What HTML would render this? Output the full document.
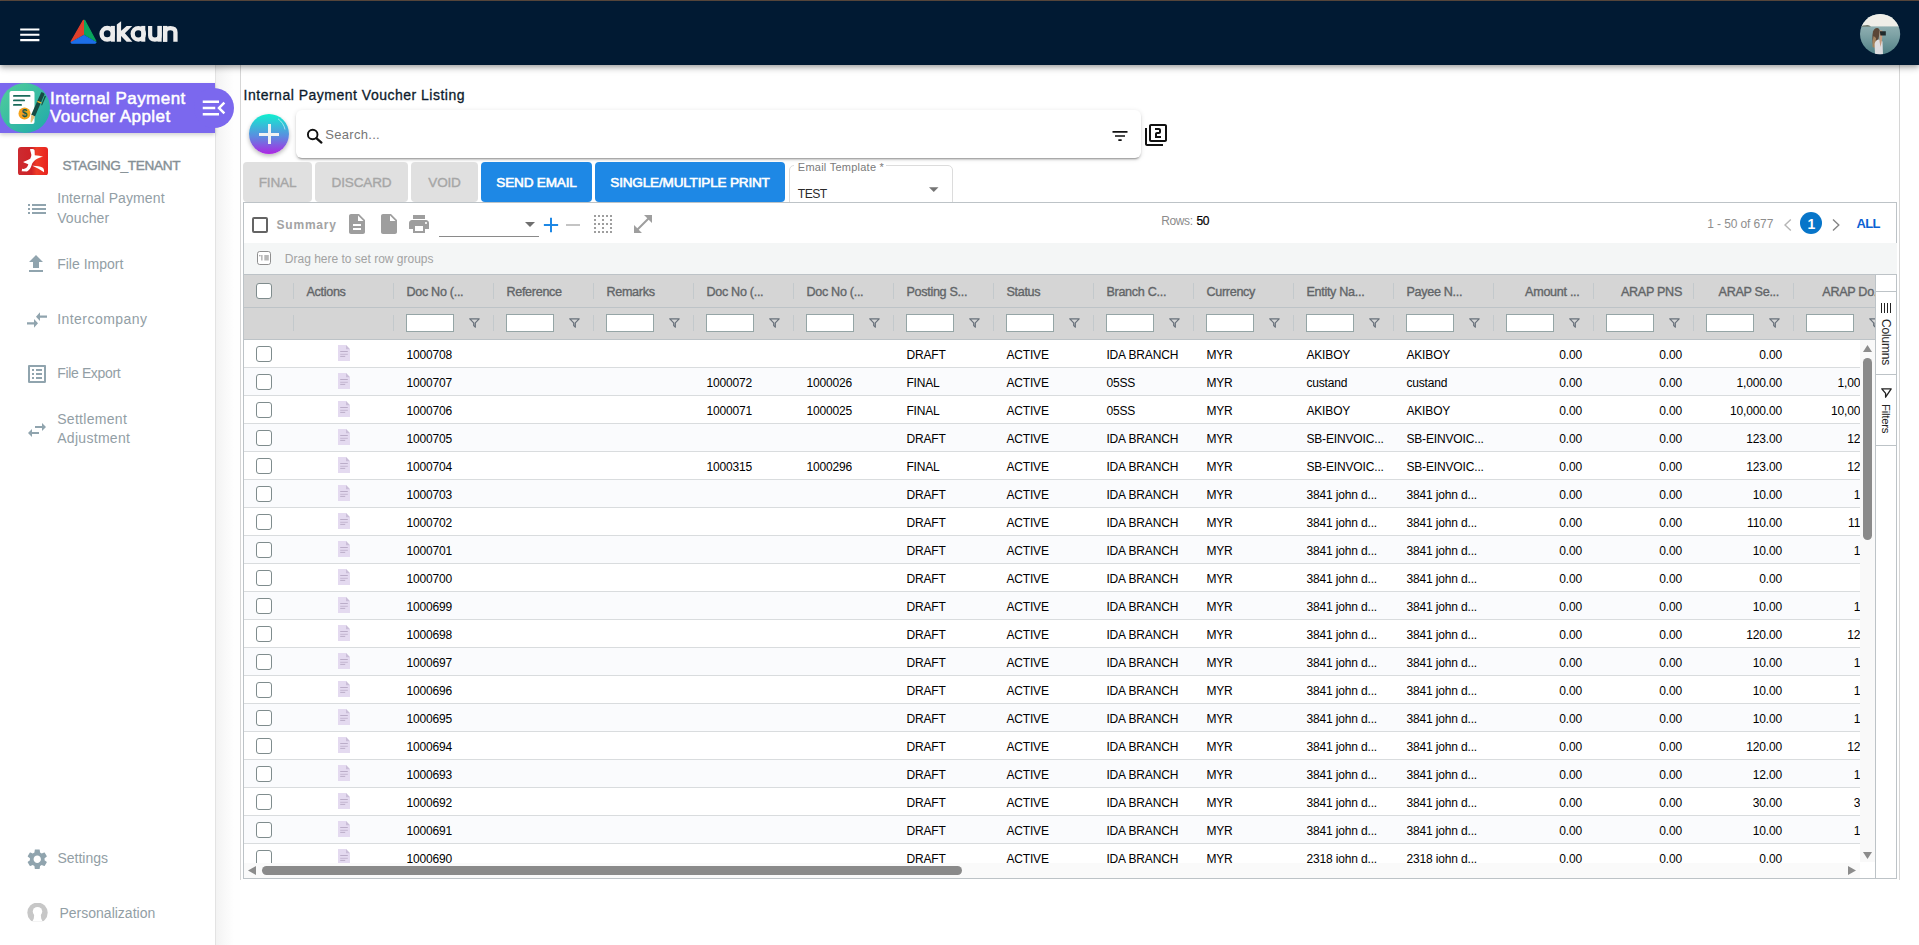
<!DOCTYPE html><html><head><meta charset="utf-8"><title>Internal Payment Voucher Listing</title><style>
*{box-sizing:border-box}
html,body{margin:0;padding:0;width:1919px;height:945px;overflow:hidden;background:#fff;font-family:"Liberation Sans",sans-serif}
.a{position:absolute;display:block}
.t{position:absolute;white-space:nowrap}
</style></head><body>
<div class="a" style="left:0;top:0;width:1919px;height:1px;background:#5c4b3f"></div>
<div class="a" style="left:0;top:1px;width:1919px;height:64px;background:#011a33;box-shadow:0 2px 4px -1px rgba(0,0,0,.2),0 4px 5px 0 rgba(0,0,0,.14),0 1px 10px 0 rgba(0,0,0,.12);z-index:5"></div>
<div class="a" style="left:0;top:0;width:1919px;height:65px;z-index:6">
<svg class="a" style="left:17.1px;top:21.9px;" width="25.6" height="25.6" viewBox="0 0 24 24"><path fill="#fff" d="M3 18h18v-2H3v2zm0-5h18v-2H3v2zm0-7v2h18V6H3z"/></svg>
<svg class="a" style="left:68px;top:18px" width="32" height="28" viewBox="0 0 32 28">
<path d="M15.4 2.3 L15.4 16.6 L3.2 23.6 Z" fill="#e0402b" stroke="#e0402b" stroke-width="1.2" stroke-linejoin="round"/>
<path d="M16.6 2.3 L16.6 16.6 L27.9 23.2 Z" fill="#0aa55c" stroke="#0aa55c" stroke-width="1.2" stroke-linejoin="round"/>
<path d="M16 17.6 L28 24.4 L27 25.2 L4 25.2 L3.2 24.6 Z" fill="#1d6fe8" stroke="#1d6fe8" stroke-width="1.2" stroke-linejoin="round"/>
</svg>
<svg class="a" style="left:98px;top:18px" width="82" height="28" viewBox="0 0 82 28"><g fill="#ececec" stroke="#ececec">
<ellipse cx="9.2" cy="15.8" rx="5.6" ry="5.75" fill="none" stroke-width="4.4"/>
<rect x="12.8" y="7.9" width="4.1" height="15.8" stroke="none"/>
<path d="M18.8 6.6 L23.1 3.3 L23.1 23.7 L18.8 23.7 Z" stroke="none"/>
<path d="M22.6 13.2 L28.6 7.9 L34.2 7.9 L26.9 15.3 L34.4 23.7 L28.6 23.7 L22.6 17.6 Z" stroke="none"/>
<ellipse cx="40.3" cy="15.8" rx="5.6" ry="5.75" fill="none" stroke-width="4.3"/>
<rect x="43.2" y="7.9" width="4.1" height="15.8" stroke="none"/>
<path d="M52.15 7.9 V17.6 Q52.15 21.55 56.9 21.55 Q61.65 21.55 61.65 17.6 V7.9" fill="none" stroke-width="4.2"/>
<rect x="59.6" y="7.9" width="4.1" height="15.8" stroke="none"/>
<rect x="65" y="7.9" width="4.2" height="15.8" stroke="none"/>
<path d="M67.1 23.7 V14.2 Q67.1 10.05 72.3 10.05 Q77.45 10.05 77.45 14.2 V23.7" fill="none" stroke-width="4.3"/>
</g></svg>
<svg class="a" style="left:1860px;top:13.7px" width="41" height="41" viewBox="0 0 41 41">
<defs><clipPath id="av"><circle cx="20.1" cy="20.1" r="20.1"/></clipPath>
<linearGradient id="sea" x1="0" y1="0" x2="0" y2="1"><stop offset="0" stop-color="#a6c0c1"/><stop offset=".5" stop-color="#7fa3a6"/><stop offset="1" stop-color="#4f7f84"/></linearGradient></defs>
<g clip-path="url(#av)">
<rect width="41" height="41" fill="url(#sea)"/>
<rect width="41" height="12.4" fill="#efeee8"/>
<path d="M1 12.6 Q3 11 5 11.6 Q7 10.8 9 11.4 L11 12.6 Z" fill="#3f4c3e"/>
<path d="M13.5 33 Q11.5 24 13 17.5 Q14.5 13.5 17.5 14 Q20 14.8 19.8 18 L18 27 Z" fill="#5a4636"/>
<path d="M12.5 33 Q12 27 13.6 22 L16 24 L15.5 34 Z" fill="#a4835e"/>
<path d="M15 41 L14.6 30 Q15.5 25.5 19 25.5 L22.5 27.5 L23 41 Z" fill="#dedde0"/>
<path d="M19.5 17 Q21 15.5 22.5 17 L22 26 L20.5 33 L19.5 27 Z" fill="#c59a7e"/>
<path d="M19.8 17.2 L25.8 17.2 L25.8 21.6 L20.4 21.6 Z" fill="#22292a"/>
</g></svg>
</div>
<div class="a" style="left:0;top:65px;width:216px;height:880px;background:#fff;border-right:1px solid #e3e3e3"></div>
<div class="a" style="left:216px;top:65px;width:24px;height:880px;background:linear-gradient(to right,#f3f3f3,#fafafa 45%,#fefefe 75%)"></div>
<div class="a" style="left:0;top:83px;width:215px;height:50px;background:#7b68ee;box-shadow:0 2px 4px rgba(0,0,0,.18)"></div>
<div class="a" style="left:194px;top:88px;width:40px;height:40px;background:#7b68ee;border-radius:50%"></div>
<svg class="a" style="left:0;top:83px" width="50" height="50" viewBox="0 0 50 50">
<defs><linearGradient id="ig" x1="0" y1="0" x2="1" y2="1"><stop offset="0" stop-color="#52cf9a"/><stop offset="1" stop-color="#1fa9ab"/></linearGradient></defs>
<circle cx="25" cy="25" r="25" fill="url(#ig)"/>
<rect x="9.5" y="8" width="25" height="33" rx="2" fill="#fff"/>
<rect x="13" y="12" width="17.5" height="1.8" rx=".9" fill="#1a6b5b"/>
<rect x="13" y="16.5" width="12" height="1.8" rx=".9" fill="#1a6b5b"/>
<rect x="13" y="21" width="9" height="1.8" rx=".9" fill="#1a6b5b"/>
<circle cx="24.5" cy="30.5" r="6" fill="#f5a31a"/>
<text x="24.5" y="34.3" text-anchor="middle" font-family="Liberation Sans" font-weight="bold" font-size="10" fill="#1a5b50">$</text>
<path d="M41.2 9.2 Q43.5 9 44.6 11 L35 33.5 L31.2 31.8 Z" fill="#174b43"/>
<path d="M31.2 31.8 L35 33.5 L31.6 39.6 L30.6 39.3 Z" fill="#e6c27a"/>
<path d="M37.6 17.8 L41.6 19.6 L41.1 20.8 L37.1 19 Z" fill="#f0b429"/>
<path d="M44.8 12.6 L46 13.2 L42 22.5 L41.2 22.1 Z" fill="#174b43"/>
</svg>
<div class="t" style="left:50px;top:89.81px;font-size:17px;line-height:17px;color:#fff;letter-spacing:0.45px;-webkit-text-stroke:0.5px #fff;">Internal Payment</div>
<div class="t" style="left:50px;top:108.21px;font-size:17px;line-height:17px;color:#fff;letter-spacing:0.45px;-webkit-text-stroke:0.5px #fff;">Voucher Applet</div>
<svg class="a" style="left:198.75px;top:92.9px;" width="30" height="30" viewBox="0 0 24 24"><path fill="#fff" d="M3 18h13v-2H3v2zm0-5h10v-2H3v2zm0-7v2h13V6H3zm18 9.59L17.42 12 21 8.41 19.59 7l-5 5 5 5L21 15.59z"/></svg>
<svg class="a" style="left:18px;top:146.5px" width="30" height="28.5" viewBox="0 0 30 28.5">
<defs><linearGradient id="rg" x1="0" y1="0" x2="1" y2="0"><stop offset="0" stop-color="#cc2b31"/><stop offset=".45" stop-color="#cf2227"/><stop offset=".62" stop-color="#ee3b27"/><stop offset="1" stop-color="#e8231f"/></linearGradient></defs>
<rect width="30" height="28.5" rx="3" fill="url(#rg)"/>
<path d="M12 2.2 C14 1.8 16.3 2 16.6 3.5 L16.8 8.3 C19.5 8.6 23 9 25 9.8 C22 10.5 19.5 11.4 17.5 12.8 C15.5 14.2 14.3 16 13.6 18.3 C13 20.5 11.5 23.5 9 24.4 L3.6 24.2 C4 23.2 4.2 22 3.9 21.4 C5.3 22.4 7 22 8.4 20.8 C9.5 19.8 10 18.6 10.3 17.3 C8.8 16.8 6.8 16 5.1 15.1 C7.5 14.2 10 13 12.2 11.7 C12.8 10.5 13.5 9 13.3 7.5 C13 5.5 12.2 3.8 12 2.2 Z" fill="#fff"/>
<path d="M14.4 18.8 C18 18.6 22 19.5 24.4 20.6 C25.8 21.3 26.3 23.5 26 25.3 C22.5 23 18.5 20.5 14.4 18.8 Z" fill="#fff"/>
</svg>
<div class="t" style="left:62.4px;top:158.79px;font-size:13.6px;line-height:13.6px;color:#858f95;letter-spacing:-0.3px;-webkit-text-stroke:0.4px #858f95;">STAGING_TENANT</div>
<svg class="a" style="left:24.8px;top:197px;" width="24" height="24" viewBox="0 0 24 24"><path fill="#90a4ae" d="M3 13h2v-2H3v2zm0 4h2v-2H3v2zm0-8h2V7H3v2zm4 4h14v-2H7v2zm0 4h14v-2H7v2zM7 7v2h14V7H7z"/></svg>
<div class="t" style="left:57.2px;top:191.35px;font-size:14px;line-height:14px;color:#929ea5;letter-spacing:0.1px;">Internal Payment</div>
<div class="t" style="left:57.2px;top:210.95px;font-size:14px;line-height:14px;color:#929ea5;letter-spacing:0.1px;">Voucher</div>
<svg class="a" style="left:24.3px;top:252px;" width="24" height="24" viewBox="0 0 24 24"><path fill="#90a4ae" d="M9 16h6v-6h4l-7-7-7 7h4zm-4 2h14v2H5z"/></svg>
<div class="t" style="left:57.2px;top:256.65px;font-size:14px;line-height:14px;color:#929ea5;letter-spacing:0px;">File Import</div>
<svg class="a" style="left:24.7px;top:310px" width="24" height="20" viewBox="0 3 24 18" preserveAspectRatio="none"><path fill="#90a4ae" d="M9.01 14H2v2h7.01v3L13 15l-3.99-4v3zm5.98-1v-3H22V8h-7.01V5L11 9l3.99 4z"/></svg>
<div class="t" style="left:57.2px;top:312.05px;font-size:14px;line-height:14px;color:#929ea5;letter-spacing:0.45px;">Intercompany</div>
<svg class="a" style="left:25.2px;top:362px;" width="24" height="24" viewBox="0 0 24 24"><path fill="#90a4ae" d="M19 5v14H5V5h14m1.1-2H3.9c-.5 0-.9.4-.9.9v16.2c0 .4.4.9.9.9h16.2c.4 0 .9-.5.9-.9V3.9c0-.5-.5-.9-.9-.9zM11 7h6v2h-6V7zm0 4h6v2h-6v-2zm0 4h6v2h-6zM7 7h2v2H7zm0 4h2v2H7zm0 4h2v2H7z"/></svg>
<div class="t" style="left:57.2px;top:366.35px;font-size:14px;line-height:14px;color:#929ea5;letter-spacing:-0.35px;">File Export</div>
<svg class="a" style="left:25.2px;top:417.5px;" width="24" height="24" viewBox="0 0 24 24"><path fill="#90a4ae" d="M6.99 11L3 15l3.99 4v-3H14v-2H6.99v-3zM21 9l-3.99-4v3H10v2h7.01v3L21 9z"/></svg>
<div class="t" style="left:57.2px;top:411.55px;font-size:14px;line-height:14px;color:#929ea5;letter-spacing:0.3px;">Settlement</div>
<div class="t" style="left:57.2px;top:430.95px;font-size:14px;line-height:14px;color:#929ea5;letter-spacing:0.3px;">Adjustment</div>
<svg class="a" style="left:24.9px;top:847px;" width="24.5" height="24.5" viewBox="0 0 24 24"><path fill="#90a4ae" d="M19.14 12.94c.04-.3.06-.61.06-.94 0-.32-.02-.64-.07-.94l2.03-1.58c.18-.14.23-.41.12-.61l-1.92-3.32c-.12-.22-.37-.29-.59-.22l-2.39.96c-.5-.38-1.03-.7-1.62-.94l-.36-2.54c-.04-.24-.24-.41-.48-.41h-3.84c-.24 0-.43.17-.47.41l-.36 2.54c-.59.24-1.13.57-1.62.94l-2.39-.96c-.22-.08-.47 0-.59.22L2.74 8.87c-.12.21-.08.47.12.61l2.03 1.58c-.05.3-.09.63-.09.94s.02.64.07.94l-2.03 1.58c-.18.14-.23.41-.12.61l1.92 3.32c.12.22.37.29.59.22l2.39-.96c.5.38 1.03.7 1.62.94l.36 2.54c.05.24.24.41.48.41h3.84c.24 0 .44-.17.47-.41l.36-2.54c.59-.24 1.13-.56 1.62-.94l2.39.96c.22.08.47 0 .59-.22l1.92-3.32c.12-.22.07-.47-.12-.61l-2.01-1.58zM12 15.6c-1.98 0-3.6-1.62-3.6-3.6s1.62-3.6 3.6-3.6 3.6 1.62 3.6 3.6-1.62 3.6-3.6 3.6z"/></svg>
<div class="t" style="left:57.4px;top:851.15px;font-size:14px;line-height:14px;color:#929ea5;letter-spacing:0px;">Settings</div>
<svg class="a" style="left:26.5px;top:903px" width="21" height="19" viewBox="0 0 21 19">
<defs><clipPath id="pc"><rect x="0" y="0" width="21" height="18.2"/></clipPath></defs>
<g clip-path="url(#pc)"><circle cx="10.5" cy="9.8" r="10.2" fill="#c7c7c7"/>
<circle cx="10.5" cy="8.6" r="4.7" fill="#fff"/>
<path d="M7.4 10 H13.6 L14.2 15.5 Q14.8 18 17 19 H4 Q6.2 18 6.8 15.5 Z" fill="#fff"/></g>
</svg>
<div class="t" style="left:59.5px;top:906.35px;font-size:14px;line-height:14px;color:#929ea5;letter-spacing:0px;">Personalization</div>
<div class="a" style="left:240px;top:65px;width:1660px;height:815px;border-left:1px solid #d6d6d6;border-right:1px solid #d6d6d6;background:#fff"></div>
<div class="t" style="left:243.6px;top:87.95px;font-size:14px;line-height:14px;color:#0d1b2c;letter-spacing:0.5px;-webkit-text-stroke:0.3px #0d1b2c;">Internal Payment Voucher Listing</div>
<div class="a" style="left:249px;top:114px;width:40px;height:40px;border-radius:50%;background:linear-gradient(to bottom,#0ff0cf,#5a8ee0 55%,#ad26e2);box-shadow:0 2px 4px rgba(0,0,0,.28)"></div>
<svg class="a" style="left:249px;top:114px" width="40" height="40" viewBox="0 0 40 40"><path d="M29 4.8 A17.5 17.5 0 0 1 36 15.5" fill="none" stroke="rgba(255,255,255,.55)" stroke-width="1"/></svg>
<div class="a" style="left:259px;top:132.5px;width:20px;height:3px;background:#f2f2f2"></div>
<div class="a" style="left:267.5px;top:124px;width:3px;height:20px;background:#f2f2f2"></div>
<div class="a" style="left:296px;top:109.5px;width:844.5px;height:48.5px;border-radius:6px;background:#fff;box-shadow:0 2px 2px rgba(0,0,0,.14),0 1px 5px rgba(0,0,0,.12),0 3px 1px -2px rgba(0,0,0,.2)"></div>
<svg class="a" style="left:305px;top:127px" width="19" height="18" viewBox="0 0 19 18"><circle cx="7.7" cy="7.5" r="4.8" fill="none" stroke="#111" stroke-width="1.9"/><path d="M11.3 11.2 L16.4 15.6" stroke="#111" stroke-width="2.3" stroke-linecap="round"/></svg>
<div class="t" style="left:325.3px;top:127.80px;font-size:13px;line-height:13px;color:#767676;letter-spacing:0.3px;">Search...</div>
<svg class="a" style="left:1110px;top:126px;" width="20" height="20" viewBox="0 0 24 24"><path fill="#111" d="M10 18h4v-2h-4v2zM3 6v2h18V6H3zm3 7h12v-2H6v2z"/></svg>
<svg class="a" style="left:1144px;top:123px;" width="24" height="24" viewBox="0 0 24 24"><path fill="#111" d="M3 5H1v16c0 1.1.9 2 2 2h16v-2H3V5zm18-4H7c-1.1 0-2 .9-2 2v14c0 1.1.9 2 2 2h14c1.1 0 2-.9 2-2V3c0-1.1-.9-2-2-2zm0 16H7V3h14v14zm-4-4h-4v-2h2c1.1 0 2-.89 2-2V7c0-1.11-.9-2-2-2h-4v2h4v2h-2c-1.1 0-2 .89-2 2v4h6v-2z"/></svg>
<div class="a" style="left:243px;top:162px;width:69px;height:39.5px;border-radius:4px;background:#e0e0e0"></div>
<div class="t" style="left:243px;width:69px;top:175.59px;font-size:13.6px;line-height:13.6px;text-align:center;color:#a6a6a6;letter-spacing:-0.2px;-webkit-text-stroke:0.35px #a6a6a6">FINAL</div>
<div class="a" style="left:315px;top:162px;width:93px;height:39.5px;border-radius:4px;background:#e0e0e0"></div>
<div class="t" style="left:315px;width:93px;top:175.59px;font-size:13.6px;line-height:13.6px;text-align:center;color:#a6a6a6;letter-spacing:-0.2px;-webkit-text-stroke:0.35px #a6a6a6">DISCARD</div>
<div class="a" style="left:411px;top:162px;width:67px;height:39.5px;border-radius:4px;background:#e0e0e0"></div>
<div class="t" style="left:411px;width:67px;top:175.59px;font-size:13.6px;line-height:13.6px;text-align:center;color:#a6a6a6;letter-spacing:-0.2px;-webkit-text-stroke:0.35px #a6a6a6">VOID</div>
<div class="a" style="left:481px;top:162px;width:111px;height:39.5px;border-radius:4px;background:#1e88e5"></div>
<div class="t" style="left:481px;width:111px;top:175.59px;font-size:13.6px;line-height:13.6px;text-align:center;color:#fff;letter-spacing:-0.2px;-webkit-text-stroke:0.6px #fff">SEND EMAIL</div>
<div class="a" style="left:595px;top:162px;width:190px;height:39.5px;border-radius:4px;background:#1e88e5"></div>
<div class="t" style="left:595px;width:190px;top:175.59px;font-size:13.6px;line-height:13.6px;text-align:center;color:#fff;letter-spacing:-0.2px;-webkit-text-stroke:0.6px #fff">SINGLE/MULTIPLE PRINT</div>
<div class="a" style="left:788.5px;top:164.6px;width:164px;height:50px;border:1px solid #dcdcdc;border-radius:5px"></div>
<div class="a" style="left:794px;top:163px;width:92px;height:5px;background:#fff"></div>
<div class="t" style="left:797.8px;top:161.99px;font-size:11px;line-height:11px;color:#7a7a7a;letter-spacing:0.25px;">Email Template *</div>
<div class="t" style="left:797.8px;top:187.77px;font-size:12.2px;line-height:12.2px;color:#2a2a2a;letter-spacing:-0.55px;">TEST</div>
<svg class="a" style="left:929.2px;top:187px" width="9.5" height="5" viewBox="0 0 10 5"><path d="M0 0 L10 0 L5 5 Z" fill="#757575"/></svg>
<div class="a" style="left:243px;top:202px;width:1654px;height:677px;border:1px solid #bdc3c7;background:#fff"></div>
<div class="a" style="left:252px;top:217px;width:16px;height:16px;border:2px solid #646464;border-radius:2px"></div>
<div class="t" style="left:276.5px;top:219.04px;font-size:12px;line-height:12px;color:#a3a3a3;font-weight:bold;letter-spacing:0.8px;">Summary</div>
<svg class="a" style="left:344.9px;top:212.2px;" width="24" height="24" viewBox="0 0 24 24"><path fill="#9e9e9e" d="M14 2H6c-1.1 0-1.99.9-1.99 2L4 20c0 1.1.89 2 1.99 2H18c1.1 0 2-.9 2-2V8l-6-6zm2 16H8v-2h8v2zm0-4H8v-2h8v2zm-3-5V3.5L18.5 9H13z"/></svg>
<svg class="a" style="left:376.9px;top:212.2px;" width="24" height="24" viewBox="0 0 24 24"><path fill="#9e9e9e" d="M6 2c-1.1 0-1.99.9-1.99 2L4 20c0 1.1.89 2 1.99 2H18c1.1 0 2-.9 2-2V8l-6-6H6zm7 7V3.5L18.5 9H13z"/></svg>
<svg class="a" style="left:406.8px;top:212.2px;" width="24" height="24" viewBox="0 0 24 24"><path fill="#9e9e9e" d="M19 8H5c-1.66 0-3 1.34-3 3v6h4v4h12v-4h4v-6c0-1.66-1.34-3-3-3zm-3 11H8v-5h8v5zm3-7c-.55 0-1-.45-1-1s.45-1 1-1 1 .45 1 1-.45 1-1 1zm-1-9H6v4h12V3z"/></svg>
<div class="a" style="left:439px;top:236px;width:100px;height:1px;background:#8a8a8a"></div>
<svg class="a" style="left:525.4px;top:222px" width="10" height="5" viewBox="0 0 10 5"><path d="M0 0 L10 0 L5 5 Z" fill="#6f6f6f"/></svg>
<svg class="a" style="left:539.3px;top:213.2px;transform:scale(1.02)" width="24" height="24" viewBox="0 0 24 24"><path fill="#1e88e5" d="M19 13h-6v6h-2v-6H5v-2h6V5h2v6h6v2z"/></svg>
<svg class="a" style="left:561.2px;top:213px;" width="24" height="24" viewBox="0 0 24 24"><path fill="#c4c4c4" d="M19 13H5v-2h14v2z"/></svg>
<svg class="a" style="left:591px;top:212px;" width="24" height="24" viewBox="0 0 24 24"><path fill="#9e9e9e" d="M7 5h2V3H7v2zm0 8h2v-2H7v2zm0 8h2v-2H7v2zm4-4h2v-2h-2v2zm0 4h2v-2h-2v2zm-8 0h2v-2H3v2zm0-4h2v-2H3v2zm0-4h2v-2H3v2zm0-4h2V7H3v2zm0-4h2V3H3v2zm8 8h2v-2h-2v2zm8 4h2v-2h-2v2zm0-4h2v-2h-2v2zm0 8h2v-2h-2v2zm0-12h2V7h-2v2zm-8 0h2V7h-2v2zm8-6v2h2V3h-2zm-8 2h2V3h-2v2zm4 16h2v-2h-2v2zm0-8h2v-2h-2v2zm0-8h2V3h-2v2z"/></svg>
<svg class="a" style="left:631px;top:212px;" width="24" height="24" viewBox="0 0 24 24"><path fill="#9e9e9e" d="M21 11V3h-8l3.29 3.29-10 10L3 13v8h8l-3.29-3.29 10-10z"/></svg>
<div class="t" style="left:1161.3px;top:214.74px;font-size:12px;line-height:12px;color:#8b8b8b;letter-spacing:-0.4px;">Rows:</div>
<div class="t" style="left:1196.5px;top:214.74px;font-size:12px;line-height:12px;color:#000;letter-spacing:-0.4px;-webkit-text-stroke:0.2px #000;">50</div>
<div class="t" style="left:1707.2px;top:217.84px;font-size:12px;line-height:12px;color:#8e8e8e;letter-spacing:-0.1px;">1 - 50 of 677</div>
<svg class="a" style="left:1783px;top:218px" width="10" height="14" viewBox="0 0 10 14"><path d="M7.8 1.5 L2 7 L7.8 12.5" fill="none" stroke="#b5b5b5" stroke-width="1.4"/></svg>
<div class="a" style="left:1800px;top:212px;width:22px;height:22px;border-radius:50%;background:#0775c9"></div>
<div class="t" style="left:1800.5px;top:216.55px;font-size:14px;line-height:14px;color:#fff;font-weight:bold;width:22px;text-align:center;">1</div>
<svg class="a" style="left:1831px;top:218px" width="10" height="14" viewBox="0 0 10 14"><path d="M2 1.5 L7.8 7 L2 12.5" fill="none" stroke="#858585" stroke-width="1.4"/></svg>
<div class="t" style="left:1856.6px;top:217.00px;font-size:13px;line-height:13px;color:#0a62d4;font-weight:bold;letter-spacing:-0.7px;">ALL</div>
<div class="a" style="left:244px;top:243px;width:1653px;height:32px;background:#f4f6f6;border-bottom:1px solid #bdc3c7"></div>
<svg class="a" style="left:257px;top:251px" width="14" height="14" viewBox="0 0 14 14"><rect x=".5" y=".5" width="13" height="13" rx="2.2" fill="#fff" stroke="#8f8f8f" stroke-width="1"/><rect x="2.2" y="4" width="1.3" height="1.3" fill="#9a9a9a"/><rect x="4.2" y="4" width="1.3" height="5.5" fill="#aaa"/><rect x="7.3" y="4" width="4.5" height="5.5" fill="#b8b8b8"/></svg>
<div class="t" style="left:284.8px;top:253.04px;font-size:12px;line-height:12px;color:#a2a2a2;letter-spacing:0px;">Drag here to set row groups</div>
<div class="a" style="left:244px;top:275px;width:1631px;height:65px;background:#d5d5d5"></div>
<div class="a" style="left:244px;top:307px;width:1631px;height:1px;background:#bdc3c7"></div>
<div class="a" style="left:244px;top:339px;width:1631px;height:1px;background:#bdc3c7"></div>
<div class="a" style="left:256px;top:283px;width:16px;height:16px;border:1px solid #7f8c8d;border-radius:3px;background:#fff"></div>
<div class="a" style="left:293px;top:283px;width:1px;height:16px;background:#c3c9cc"></div>
<div class="a" style="left:293px;top:315px;width:1px;height:16px;background:#c3c9cc"></div>
<div class="a" style="left:393px;top:283px;width:1px;height:16px;background:#c3c9cc"></div>
<div class="a" style="left:393px;top:315px;width:1px;height:16px;background:#c3c9cc"></div>
<div class="a" style="left:493px;top:283px;width:1px;height:16px;background:#c3c9cc"></div>
<div class="a" style="left:493px;top:315px;width:1px;height:16px;background:#c3c9cc"></div>
<div class="a" style="left:593px;top:283px;width:1px;height:16px;background:#c3c9cc"></div>
<div class="a" style="left:593px;top:315px;width:1px;height:16px;background:#c3c9cc"></div>
<div class="a" style="left:693px;top:283px;width:1px;height:16px;background:#c3c9cc"></div>
<div class="a" style="left:693px;top:315px;width:1px;height:16px;background:#c3c9cc"></div>
<div class="a" style="left:793px;top:283px;width:1px;height:16px;background:#c3c9cc"></div>
<div class="a" style="left:793px;top:315px;width:1px;height:16px;background:#c3c9cc"></div>
<div class="a" style="left:893px;top:283px;width:1px;height:16px;background:#c3c9cc"></div>
<div class="a" style="left:893px;top:315px;width:1px;height:16px;background:#c3c9cc"></div>
<div class="a" style="left:993px;top:283px;width:1px;height:16px;background:#c3c9cc"></div>
<div class="a" style="left:993px;top:315px;width:1px;height:16px;background:#c3c9cc"></div>
<div class="a" style="left:1093px;top:283px;width:1px;height:16px;background:#c3c9cc"></div>
<div class="a" style="left:1093px;top:315px;width:1px;height:16px;background:#c3c9cc"></div>
<div class="a" style="left:1193px;top:283px;width:1px;height:16px;background:#c3c9cc"></div>
<div class="a" style="left:1193px;top:315px;width:1px;height:16px;background:#c3c9cc"></div>
<div class="a" style="left:1293px;top:283px;width:1px;height:16px;background:#c3c9cc"></div>
<div class="a" style="left:1293px;top:315px;width:1px;height:16px;background:#c3c9cc"></div>
<div class="a" style="left:1393px;top:283px;width:1px;height:16px;background:#c3c9cc"></div>
<div class="a" style="left:1393px;top:315px;width:1px;height:16px;background:#c3c9cc"></div>
<div class="a" style="left:1493px;top:283px;width:1px;height:16px;background:#c3c9cc"></div>
<div class="a" style="left:1493px;top:315px;width:1px;height:16px;background:#c3c9cc"></div>
<div class="a" style="left:1593px;top:283px;width:1px;height:16px;background:#c3c9cc"></div>
<div class="a" style="left:1593px;top:315px;width:1px;height:16px;background:#c3c9cc"></div>
<div class="a" style="left:1693px;top:283px;width:1px;height:16px;background:#c3c9cc"></div>
<div class="a" style="left:1693px;top:315px;width:1px;height:16px;background:#c3c9cc"></div>
<div class="a" style="left:1793px;top:283px;width:1px;height:16px;background:#c3c9cc"></div>
<div class="a" style="left:1793px;top:315px;width:1px;height:16px;background:#c3c9cc"></div>
<div class="t" style="left:306.4px;top:285.63px;font-size:12.6px;line-height:12.6px;color:#626568;letter-spacing:-0.3px;-webkit-text-stroke:0.35px #626568;">Actions</div>
<div class="t" style="left:406.4px;top:285.63px;font-size:12.6px;line-height:12.6px;color:#626568;letter-spacing:-0.3px;-webkit-text-stroke:0.35px #626568;">Doc No (...</div>
<div class="t" style="left:506.4px;top:285.63px;font-size:12.6px;line-height:12.6px;color:#626568;letter-spacing:-0.3px;-webkit-text-stroke:0.35px #626568;">Reference</div>
<div class="t" style="left:606.4px;top:285.63px;font-size:12.6px;line-height:12.6px;color:#626568;letter-spacing:-0.3px;-webkit-text-stroke:0.35px #626568;">Remarks</div>
<div class="t" style="left:706.4px;top:285.63px;font-size:12.6px;line-height:12.6px;color:#626568;letter-spacing:-0.3px;-webkit-text-stroke:0.35px #626568;">Doc No (...</div>
<div class="t" style="left:806.4px;top:285.63px;font-size:12.6px;line-height:12.6px;color:#626568;letter-spacing:-0.3px;-webkit-text-stroke:0.35px #626568;">Doc No (...</div>
<div class="t" style="left:906.4px;top:285.63px;font-size:12.6px;line-height:12.6px;color:#626568;letter-spacing:-0.3px;-webkit-text-stroke:0.35px #626568;">Posting S...</div>
<div class="t" style="left:1006.4px;top:285.63px;font-size:12.6px;line-height:12.6px;color:#626568;letter-spacing:-0.3px;-webkit-text-stroke:0.35px #626568;">Status</div>
<div class="t" style="left:1106.4px;top:285.63px;font-size:12.6px;line-height:12.6px;color:#626568;letter-spacing:-0.3px;-webkit-text-stroke:0.35px #626568;">Branch C...</div>
<div class="t" style="left:1206.4px;top:285.63px;font-size:12.6px;line-height:12.6px;color:#626568;letter-spacing:-0.3px;-webkit-text-stroke:0.35px #626568;">Currency</div>
<div class="t" style="left:1306.4px;top:285.63px;font-size:12.6px;line-height:12.6px;color:#626568;letter-spacing:-0.3px;-webkit-text-stroke:0.35px #626568;">Entity Na...</div>
<div class="t" style="left:1406.4px;top:285.63px;font-size:12.6px;line-height:12.6px;color:#626568;letter-spacing:-0.3px;-webkit-text-stroke:0.35px #626568;">Payee N...</div>
<div class="t" style="right:339.5px;top:285.63px;font-size:12.6px;line-height:12.6px;color:#626568;letter-spacing:-0.3px;-webkit-text-stroke:0.35px #626568;">Amount ...</div>
<div class="t" style="right:237px;top:285.63px;font-size:12.6px;line-height:12.6px;color:#626568;letter-spacing:-0.3px;-webkit-text-stroke:0.35px #626568;">ARAP PNS</div>
<div class="t" style="right:140px;top:285.63px;font-size:12.6px;line-height:12.6px;color:#626568;letter-spacing:-0.3px;-webkit-text-stroke:0.35px #626568;">ARAP Se...</div>
<div class="a" style="left:1793px;top:280px;width:82px;height:24px;overflow:hidden">
<div class="t" style="left:29.3px;top:5.63px;font-size:12.6px;line-height:12.6px;color:#626568;letter-spacing:-0.3px;-webkit-text-stroke:0.35px #626568;">ARAP Do...</div>
</div>
<div class="a" style="left:406px;top:314px;width:48px;height:18px;border:1px solid #95a5a6;background:#fff"></div>
<svg class="a" style="left:469px;top:318px" width="11" height="10" viewBox="0 0 11 10"><path d="M0.8 0.8 L10.2 0.8 L6.3 4.8 L6.3 9.2 L4.7 7.6 L4.7 4.8 Z" fill="none" stroke="#67707a" stroke-width="1.2" stroke-linejoin="round"/></svg>
<div class="a" style="left:506px;top:314px;width:48px;height:18px;border:1px solid #95a5a6;background:#fff"></div>
<svg class="a" style="left:569px;top:318px" width="11" height="10" viewBox="0 0 11 10"><path d="M0.8 0.8 L10.2 0.8 L6.3 4.8 L6.3 9.2 L4.7 7.6 L4.7 4.8 Z" fill="none" stroke="#67707a" stroke-width="1.2" stroke-linejoin="round"/></svg>
<div class="a" style="left:606px;top:314px;width:48px;height:18px;border:1px solid #95a5a6;background:#fff"></div>
<svg class="a" style="left:669px;top:318px" width="11" height="10" viewBox="0 0 11 10"><path d="M0.8 0.8 L10.2 0.8 L6.3 4.8 L6.3 9.2 L4.7 7.6 L4.7 4.8 Z" fill="none" stroke="#67707a" stroke-width="1.2" stroke-linejoin="round"/></svg>
<div class="a" style="left:706px;top:314px;width:48px;height:18px;border:1px solid #95a5a6;background:#fff"></div>
<svg class="a" style="left:769px;top:318px" width="11" height="10" viewBox="0 0 11 10"><path d="M0.8 0.8 L10.2 0.8 L6.3 4.8 L6.3 9.2 L4.7 7.6 L4.7 4.8 Z" fill="none" stroke="#67707a" stroke-width="1.2" stroke-linejoin="round"/></svg>
<div class="a" style="left:806px;top:314px;width:48px;height:18px;border:1px solid #95a5a6;background:#fff"></div>
<svg class="a" style="left:869px;top:318px" width="11" height="10" viewBox="0 0 11 10"><path d="M0.8 0.8 L10.2 0.8 L6.3 4.8 L6.3 9.2 L4.7 7.6 L4.7 4.8 Z" fill="none" stroke="#67707a" stroke-width="1.2" stroke-linejoin="round"/></svg>
<div class="a" style="left:906px;top:314px;width:48px;height:18px;border:1px solid #95a5a6;background:#fff"></div>
<svg class="a" style="left:969px;top:318px" width="11" height="10" viewBox="0 0 11 10"><path d="M0.8 0.8 L10.2 0.8 L6.3 4.8 L6.3 9.2 L4.7 7.6 L4.7 4.8 Z" fill="none" stroke="#67707a" stroke-width="1.2" stroke-linejoin="round"/></svg>
<div class="a" style="left:1006px;top:314px;width:48px;height:18px;border:1px solid #95a5a6;background:#fff"></div>
<svg class="a" style="left:1069px;top:318px" width="11" height="10" viewBox="0 0 11 10"><path d="M0.8 0.8 L10.2 0.8 L6.3 4.8 L6.3 9.2 L4.7 7.6 L4.7 4.8 Z" fill="none" stroke="#67707a" stroke-width="1.2" stroke-linejoin="round"/></svg>
<div class="a" style="left:1106px;top:314px;width:48px;height:18px;border:1px solid #95a5a6;background:#fff"></div>
<svg class="a" style="left:1169px;top:318px" width="11" height="10" viewBox="0 0 11 10"><path d="M0.8 0.8 L10.2 0.8 L6.3 4.8 L6.3 9.2 L4.7 7.6 L4.7 4.8 Z" fill="none" stroke="#67707a" stroke-width="1.2" stroke-linejoin="round"/></svg>
<div class="a" style="left:1206px;top:314px;width:48px;height:18px;border:1px solid #95a5a6;background:#fff"></div>
<svg class="a" style="left:1269px;top:318px" width="11" height="10" viewBox="0 0 11 10"><path d="M0.8 0.8 L10.2 0.8 L6.3 4.8 L6.3 9.2 L4.7 7.6 L4.7 4.8 Z" fill="none" stroke="#67707a" stroke-width="1.2" stroke-linejoin="round"/></svg>
<div class="a" style="left:1306px;top:314px;width:48px;height:18px;border:1px solid #95a5a6;background:#fff"></div>
<svg class="a" style="left:1369px;top:318px" width="11" height="10" viewBox="0 0 11 10"><path d="M0.8 0.8 L10.2 0.8 L6.3 4.8 L6.3 9.2 L4.7 7.6 L4.7 4.8 Z" fill="none" stroke="#67707a" stroke-width="1.2" stroke-linejoin="round"/></svg>
<div class="a" style="left:1406px;top:314px;width:48px;height:18px;border:1px solid #95a5a6;background:#fff"></div>
<svg class="a" style="left:1469px;top:318px" width="11" height="10" viewBox="0 0 11 10"><path d="M0.8 0.8 L10.2 0.8 L6.3 4.8 L6.3 9.2 L4.7 7.6 L4.7 4.8 Z" fill="none" stroke="#67707a" stroke-width="1.2" stroke-linejoin="round"/></svg>
<div class="a" style="left:1506px;top:314px;width:48px;height:18px;border:1px solid #95a5a6;background:#fff"></div>
<svg class="a" style="left:1569px;top:318px" width="11" height="10" viewBox="0 0 11 10"><path d="M0.8 0.8 L10.2 0.8 L6.3 4.8 L6.3 9.2 L4.7 7.6 L4.7 4.8 Z" fill="none" stroke="#67707a" stroke-width="1.2" stroke-linejoin="round"/></svg>
<div class="a" style="left:1606px;top:314px;width:48px;height:18px;border:1px solid #95a5a6;background:#fff"></div>
<svg class="a" style="left:1669px;top:318px" width="11" height="10" viewBox="0 0 11 10"><path d="M0.8 0.8 L10.2 0.8 L6.3 4.8 L6.3 9.2 L4.7 7.6 L4.7 4.8 Z" fill="none" stroke="#67707a" stroke-width="1.2" stroke-linejoin="round"/></svg>
<div class="a" style="left:1706px;top:314px;width:48px;height:18px;border:1px solid #95a5a6;background:#fff"></div>
<svg class="a" style="left:1769px;top:318px" width="11" height="10" viewBox="0 0 11 10"><path d="M0.8 0.8 L10.2 0.8 L6.3 4.8 L6.3 9.2 L4.7 7.6 L4.7 4.8 Z" fill="none" stroke="#67707a" stroke-width="1.2" stroke-linejoin="round"/></svg>
<div class="a" style="left:1806px;top:314px;width:48px;height:18px;border:1px solid #95a5a6;background:#fff"></div>
<svg class="a" style="left:1869px;top:318px" width="11" height="10" viewBox="0 0 11 10"><path d="M0.8 0.8 L10.2 0.8 L6.3 4.8 L6.3 9.2 L4.7 7.6 L4.7 4.8 Z" fill="none" stroke="#67707a" stroke-width="1.2" stroke-linejoin="round"/></svg>
<div class="a" style="left:244px;top:340px;width:1616px;height:523px;overflow:hidden">
<div class="a" style="left:0;top:0px;width:1616px;height:28px;background:#fff;border-bottom:1px solid #d9dcde"></div>
<div class="a" style="left:12px;top:6px;width:16px;height:16px;border:1px solid #7f8c8d;border-radius:3px;background:#fff"></div>
<svg class="a" style="left:94px;top:5.3px" width="12" height="16" viewBox="0 0 12 16"><path d="M0 0 H8 L12 4.3 V16 H0 Z" fill="#e4daf0"/><path d="M8 0 L12 4.3 H8 Z" fill="#cbbfd9"/><rect x="2.2" y="6" width="7.6" height=".9" fill="#b6a9c4"/><rect x="2.2" y="8.8" width="7.6" height=".9" fill="#c0b3cd"/><rect x="2.2" y="10.9" width="5" height=".9" fill="#b6a9c4"/></svg>
<div class="t" style="left:162.4px;top:8.64px;font-size:12px;line-height:12px;color:#000;letter-spacing:-0.15px">1000708</div>
<div class="t" style="left:662.4px;top:8.64px;font-size:12px;line-height:12px;color:#000;letter-spacing:-0.15px">DRAFT</div>
<div class="t" style="left:762.4px;top:8.64px;font-size:12px;line-height:12px;color:#000;letter-spacing:-0.15px">ACTIVE</div>
<div class="t" style="left:862.4px;top:8.64px;font-size:12px;line-height:12px;color:#000;letter-spacing:-0.15px">IDA BRANCH</div>
<div class="t" style="left:962.4px;top:8.64px;font-size:12px;line-height:12px;color:#000;letter-spacing:-0.15px">MYR</div>
<div class="t" style="left:1062.4px;top:8.64px;font-size:12px;line-height:12px;color:#000;letter-spacing:-0.15px">AKIBOY</div>
<div class="t" style="left:1162.4px;top:8.64px;font-size:12px;line-height:12px;color:#000;letter-spacing:-0.15px">AKIBOY</div>
<div class="t" style="right:278px;top:8.64px;font-size:12px;line-height:12px;color:#000;letter-spacing:-0.15px">0.00</div>
<div class="t" style="right:178px;top:8.64px;font-size:12px;line-height:12px;color:#000;letter-spacing:-0.15px">0.00</div>
<div class="t" style="right:78px;top:8.64px;font-size:12px;line-height:12px;color:#000;letter-spacing:-0.15px">0.00</div>
<div class="t" style="right:-23px;top:8.64px;font-size:12px;line-height:12px;color:#000;letter-spacing:-0.15px">0.00</div>
<div class="a" style="left:0;top:28px;width:1616px;height:28px;background:#fafbfd;border-bottom:1px solid #d9dcde"></div>
<div class="a" style="left:12px;top:34px;width:16px;height:16px;border:1px solid #7f8c8d;border-radius:3px;background:#fff"></div>
<svg class="a" style="left:94px;top:33.3px" width="12" height="16" viewBox="0 0 12 16"><path d="M0 0 H8 L12 4.3 V16 H0 Z" fill="#e4daf0"/><path d="M8 0 L12 4.3 H8 Z" fill="#cbbfd9"/><rect x="2.2" y="6" width="7.6" height=".9" fill="#b6a9c4"/><rect x="2.2" y="8.8" width="7.6" height=".9" fill="#c0b3cd"/><rect x="2.2" y="10.9" width="5" height=".9" fill="#b6a9c4"/></svg>
<div class="t" style="left:162.4px;top:36.64px;font-size:12px;line-height:12px;color:#000;letter-spacing:-0.15px">1000707</div>
<div class="t" style="left:462.4px;top:36.64px;font-size:12px;line-height:12px;color:#000;letter-spacing:-0.15px">1000072</div>
<div class="t" style="left:562.4px;top:36.64px;font-size:12px;line-height:12px;color:#000;letter-spacing:-0.15px">1000026</div>
<div class="t" style="left:662.4px;top:36.64px;font-size:12px;line-height:12px;color:#000;letter-spacing:-0.15px">FINAL</div>
<div class="t" style="left:762.4px;top:36.64px;font-size:12px;line-height:12px;color:#000;letter-spacing:-0.15px">ACTIVE</div>
<div class="t" style="left:862.4px;top:36.64px;font-size:12px;line-height:12px;color:#000;letter-spacing:-0.15px">05SS</div>
<div class="t" style="left:962.4px;top:36.64px;font-size:12px;line-height:12px;color:#000;letter-spacing:-0.15px">MYR</div>
<div class="t" style="left:1062.4px;top:36.64px;font-size:12px;line-height:12px;color:#000;letter-spacing:-0.15px">custand</div>
<div class="t" style="left:1162.4px;top:36.64px;font-size:12px;line-height:12px;color:#000;letter-spacing:-0.15px">custand</div>
<div class="t" style="right:278px;top:36.64px;font-size:12px;line-height:12px;color:#000;letter-spacing:-0.15px">0.00</div>
<div class="t" style="right:178px;top:36.64px;font-size:12px;line-height:12px;color:#000;letter-spacing:-0.15px">0.00</div>
<div class="t" style="right:78px;top:36.64px;font-size:12px;line-height:12px;color:#000;letter-spacing:-0.15px">1,000.00</div>
<div class="t" style="right:-23px;top:36.64px;font-size:12px;line-height:12px;color:#000;letter-spacing:-0.15px">1,000.00</div>
<div class="a" style="left:0;top:56px;width:1616px;height:28px;background:#fff;border-bottom:1px solid #d9dcde"></div>
<div class="a" style="left:12px;top:62px;width:16px;height:16px;border:1px solid #7f8c8d;border-radius:3px;background:#fff"></div>
<svg class="a" style="left:94px;top:61.3px" width="12" height="16" viewBox="0 0 12 16"><path d="M0 0 H8 L12 4.3 V16 H0 Z" fill="#e4daf0"/><path d="M8 0 L12 4.3 H8 Z" fill="#cbbfd9"/><rect x="2.2" y="6" width="7.6" height=".9" fill="#b6a9c4"/><rect x="2.2" y="8.8" width="7.6" height=".9" fill="#c0b3cd"/><rect x="2.2" y="10.9" width="5" height=".9" fill="#b6a9c4"/></svg>
<div class="t" style="left:162.4px;top:64.64px;font-size:12px;line-height:12px;color:#000;letter-spacing:-0.15px">1000706</div>
<div class="t" style="left:462.4px;top:64.64px;font-size:12px;line-height:12px;color:#000;letter-spacing:-0.15px">1000071</div>
<div class="t" style="left:562.4px;top:64.64px;font-size:12px;line-height:12px;color:#000;letter-spacing:-0.15px">1000025</div>
<div class="t" style="left:662.4px;top:64.64px;font-size:12px;line-height:12px;color:#000;letter-spacing:-0.15px">FINAL</div>
<div class="t" style="left:762.4px;top:64.64px;font-size:12px;line-height:12px;color:#000;letter-spacing:-0.15px">ACTIVE</div>
<div class="t" style="left:862.4px;top:64.64px;font-size:12px;line-height:12px;color:#000;letter-spacing:-0.15px">05SS</div>
<div class="t" style="left:962.4px;top:64.64px;font-size:12px;line-height:12px;color:#000;letter-spacing:-0.15px">MYR</div>
<div class="t" style="left:1062.4px;top:64.64px;font-size:12px;line-height:12px;color:#000;letter-spacing:-0.15px">AKIBOY</div>
<div class="t" style="left:1162.4px;top:64.64px;font-size:12px;line-height:12px;color:#000;letter-spacing:-0.15px">AKIBOY</div>
<div class="t" style="right:278px;top:64.64px;font-size:12px;line-height:12px;color:#000;letter-spacing:-0.15px">0.00</div>
<div class="t" style="right:178px;top:64.64px;font-size:12px;line-height:12px;color:#000;letter-spacing:-0.15px">0.00</div>
<div class="t" style="right:78px;top:64.64px;font-size:12px;line-height:12px;color:#000;letter-spacing:-0.15px">10,000.00</div>
<div class="t" style="right:-23px;top:64.64px;font-size:12px;line-height:12px;color:#000;letter-spacing:-0.15px">10,000.00</div>
<div class="a" style="left:0;top:84px;width:1616px;height:28px;background:#fafbfd;border-bottom:1px solid #d9dcde"></div>
<div class="a" style="left:12px;top:90px;width:16px;height:16px;border:1px solid #7f8c8d;border-radius:3px;background:#fff"></div>
<svg class="a" style="left:94px;top:89.3px" width="12" height="16" viewBox="0 0 12 16"><path d="M0 0 H8 L12 4.3 V16 H0 Z" fill="#e4daf0"/><path d="M8 0 L12 4.3 H8 Z" fill="#cbbfd9"/><rect x="2.2" y="6" width="7.6" height=".9" fill="#b6a9c4"/><rect x="2.2" y="8.8" width="7.6" height=".9" fill="#c0b3cd"/><rect x="2.2" y="10.9" width="5" height=".9" fill="#b6a9c4"/></svg>
<div class="t" style="left:162.4px;top:92.64px;font-size:12px;line-height:12px;color:#000;letter-spacing:-0.15px">1000705</div>
<div class="t" style="left:662.4px;top:92.64px;font-size:12px;line-height:12px;color:#000;letter-spacing:-0.15px">DRAFT</div>
<div class="t" style="left:762.4px;top:92.64px;font-size:12px;line-height:12px;color:#000;letter-spacing:-0.15px">ACTIVE</div>
<div class="t" style="left:862.4px;top:92.64px;font-size:12px;line-height:12px;color:#000;letter-spacing:-0.15px">IDA BRANCH</div>
<div class="t" style="left:962.4px;top:92.64px;font-size:12px;line-height:12px;color:#000;letter-spacing:-0.15px">MYR</div>
<div class="t" style="left:1062.4px;top:92.64px;font-size:12px;line-height:12px;color:#000;letter-spacing:-0.15px">SB-EINVOIC...</div>
<div class="t" style="left:1162.4px;top:92.64px;font-size:12px;line-height:12px;color:#000;letter-spacing:-0.15px">SB-EINVOIC...</div>
<div class="t" style="right:278px;top:92.64px;font-size:12px;line-height:12px;color:#000;letter-spacing:-0.15px">0.00</div>
<div class="t" style="right:178px;top:92.64px;font-size:12px;line-height:12px;color:#000;letter-spacing:-0.15px">0.00</div>
<div class="t" style="right:78px;top:92.64px;font-size:12px;line-height:12px;color:#000;letter-spacing:-0.15px">123.00</div>
<div class="t" style="right:-23px;top:92.64px;font-size:12px;line-height:12px;color:#000;letter-spacing:-0.15px">123.00</div>
<div class="a" style="left:0;top:112px;width:1616px;height:28px;background:#fff;border-bottom:1px solid #d9dcde"></div>
<div class="a" style="left:12px;top:118px;width:16px;height:16px;border:1px solid #7f8c8d;border-radius:3px;background:#fff"></div>
<svg class="a" style="left:94px;top:117.3px" width="12" height="16" viewBox="0 0 12 16"><path d="M0 0 H8 L12 4.3 V16 H0 Z" fill="#e4daf0"/><path d="M8 0 L12 4.3 H8 Z" fill="#cbbfd9"/><rect x="2.2" y="6" width="7.6" height=".9" fill="#b6a9c4"/><rect x="2.2" y="8.8" width="7.6" height=".9" fill="#c0b3cd"/><rect x="2.2" y="10.9" width="5" height=".9" fill="#b6a9c4"/></svg>
<div class="t" style="left:162.4px;top:120.64px;font-size:12px;line-height:12px;color:#000;letter-spacing:-0.15px">1000704</div>
<div class="t" style="left:462.4px;top:120.64px;font-size:12px;line-height:12px;color:#000;letter-spacing:-0.15px">1000315</div>
<div class="t" style="left:562.4px;top:120.64px;font-size:12px;line-height:12px;color:#000;letter-spacing:-0.15px">1000296</div>
<div class="t" style="left:662.4px;top:120.64px;font-size:12px;line-height:12px;color:#000;letter-spacing:-0.15px">FINAL</div>
<div class="t" style="left:762.4px;top:120.64px;font-size:12px;line-height:12px;color:#000;letter-spacing:-0.15px">ACTIVE</div>
<div class="t" style="left:862.4px;top:120.64px;font-size:12px;line-height:12px;color:#000;letter-spacing:-0.15px">IDA BRANCH</div>
<div class="t" style="left:962.4px;top:120.64px;font-size:12px;line-height:12px;color:#000;letter-spacing:-0.15px">MYR</div>
<div class="t" style="left:1062.4px;top:120.64px;font-size:12px;line-height:12px;color:#000;letter-spacing:-0.15px">SB-EINVOIC...</div>
<div class="t" style="left:1162.4px;top:120.64px;font-size:12px;line-height:12px;color:#000;letter-spacing:-0.15px">SB-EINVOIC...</div>
<div class="t" style="right:278px;top:120.64px;font-size:12px;line-height:12px;color:#000;letter-spacing:-0.15px">0.00</div>
<div class="t" style="right:178px;top:120.64px;font-size:12px;line-height:12px;color:#000;letter-spacing:-0.15px">0.00</div>
<div class="t" style="right:78px;top:120.64px;font-size:12px;line-height:12px;color:#000;letter-spacing:-0.15px">123.00</div>
<div class="t" style="right:-23px;top:120.64px;font-size:12px;line-height:12px;color:#000;letter-spacing:-0.15px">123.00</div>
<div class="a" style="left:0;top:140px;width:1616px;height:28px;background:#fafbfd;border-bottom:1px solid #d9dcde"></div>
<div class="a" style="left:12px;top:146px;width:16px;height:16px;border:1px solid #7f8c8d;border-radius:3px;background:#fff"></div>
<svg class="a" style="left:94px;top:145.3px" width="12" height="16" viewBox="0 0 12 16"><path d="M0 0 H8 L12 4.3 V16 H0 Z" fill="#e4daf0"/><path d="M8 0 L12 4.3 H8 Z" fill="#cbbfd9"/><rect x="2.2" y="6" width="7.6" height=".9" fill="#b6a9c4"/><rect x="2.2" y="8.8" width="7.6" height=".9" fill="#c0b3cd"/><rect x="2.2" y="10.9" width="5" height=".9" fill="#b6a9c4"/></svg>
<div class="t" style="left:162.4px;top:148.64px;font-size:12px;line-height:12px;color:#000;letter-spacing:-0.15px">1000703</div>
<div class="t" style="left:662.4px;top:148.64px;font-size:12px;line-height:12px;color:#000;letter-spacing:-0.15px">DRAFT</div>
<div class="t" style="left:762.4px;top:148.64px;font-size:12px;line-height:12px;color:#000;letter-spacing:-0.15px">ACTIVE</div>
<div class="t" style="left:862.4px;top:148.64px;font-size:12px;line-height:12px;color:#000;letter-spacing:-0.15px">IDA BRANCH</div>
<div class="t" style="left:962.4px;top:148.64px;font-size:12px;line-height:12px;color:#000;letter-spacing:-0.15px">MYR</div>
<div class="t" style="left:1062.4px;top:148.64px;font-size:12px;line-height:12px;color:#000;letter-spacing:-0.15px">3841 john d...</div>
<div class="t" style="left:1162.4px;top:148.64px;font-size:12px;line-height:12px;color:#000;letter-spacing:-0.15px">3841 john d...</div>
<div class="t" style="right:278px;top:148.64px;font-size:12px;line-height:12px;color:#000;letter-spacing:-0.15px">0.00</div>
<div class="t" style="right:178px;top:148.64px;font-size:12px;line-height:12px;color:#000;letter-spacing:-0.15px">0.00</div>
<div class="t" style="right:78px;top:148.64px;font-size:12px;line-height:12px;color:#000;letter-spacing:-0.15px">10.00</div>
<div class="t" style="right:-23px;top:148.64px;font-size:12px;line-height:12px;color:#000;letter-spacing:-0.15px">10.00</div>
<div class="a" style="left:0;top:168px;width:1616px;height:28px;background:#fff;border-bottom:1px solid #d9dcde"></div>
<div class="a" style="left:12px;top:174px;width:16px;height:16px;border:1px solid #7f8c8d;border-radius:3px;background:#fff"></div>
<svg class="a" style="left:94px;top:173.3px" width="12" height="16" viewBox="0 0 12 16"><path d="M0 0 H8 L12 4.3 V16 H0 Z" fill="#e4daf0"/><path d="M8 0 L12 4.3 H8 Z" fill="#cbbfd9"/><rect x="2.2" y="6" width="7.6" height=".9" fill="#b6a9c4"/><rect x="2.2" y="8.8" width="7.6" height=".9" fill="#c0b3cd"/><rect x="2.2" y="10.9" width="5" height=".9" fill="#b6a9c4"/></svg>
<div class="t" style="left:162.4px;top:176.64px;font-size:12px;line-height:12px;color:#000;letter-spacing:-0.15px">1000702</div>
<div class="t" style="left:662.4px;top:176.64px;font-size:12px;line-height:12px;color:#000;letter-spacing:-0.15px">DRAFT</div>
<div class="t" style="left:762.4px;top:176.64px;font-size:12px;line-height:12px;color:#000;letter-spacing:-0.15px">ACTIVE</div>
<div class="t" style="left:862.4px;top:176.64px;font-size:12px;line-height:12px;color:#000;letter-spacing:-0.15px">IDA BRANCH</div>
<div class="t" style="left:962.4px;top:176.64px;font-size:12px;line-height:12px;color:#000;letter-spacing:-0.15px">MYR</div>
<div class="t" style="left:1062.4px;top:176.64px;font-size:12px;line-height:12px;color:#000;letter-spacing:-0.15px">3841 john d...</div>
<div class="t" style="left:1162.4px;top:176.64px;font-size:12px;line-height:12px;color:#000;letter-spacing:-0.15px">3841 john d...</div>
<div class="t" style="right:278px;top:176.64px;font-size:12px;line-height:12px;color:#000;letter-spacing:-0.15px">0.00</div>
<div class="t" style="right:178px;top:176.64px;font-size:12px;line-height:12px;color:#000;letter-spacing:-0.15px">0.00</div>
<div class="t" style="right:78px;top:176.64px;font-size:12px;line-height:12px;color:#000;letter-spacing:-0.15px">110.00</div>
<div class="t" style="right:-23px;top:176.64px;font-size:12px;line-height:12px;color:#000;letter-spacing:-0.15px">110.00</div>
<div class="a" style="left:0;top:196px;width:1616px;height:28px;background:#fafbfd;border-bottom:1px solid #d9dcde"></div>
<div class="a" style="left:12px;top:202px;width:16px;height:16px;border:1px solid #7f8c8d;border-radius:3px;background:#fff"></div>
<svg class="a" style="left:94px;top:201.3px" width="12" height="16" viewBox="0 0 12 16"><path d="M0 0 H8 L12 4.3 V16 H0 Z" fill="#e4daf0"/><path d="M8 0 L12 4.3 H8 Z" fill="#cbbfd9"/><rect x="2.2" y="6" width="7.6" height=".9" fill="#b6a9c4"/><rect x="2.2" y="8.8" width="7.6" height=".9" fill="#c0b3cd"/><rect x="2.2" y="10.9" width="5" height=".9" fill="#b6a9c4"/></svg>
<div class="t" style="left:162.4px;top:204.64px;font-size:12px;line-height:12px;color:#000;letter-spacing:-0.15px">1000701</div>
<div class="t" style="left:662.4px;top:204.64px;font-size:12px;line-height:12px;color:#000;letter-spacing:-0.15px">DRAFT</div>
<div class="t" style="left:762.4px;top:204.64px;font-size:12px;line-height:12px;color:#000;letter-spacing:-0.15px">ACTIVE</div>
<div class="t" style="left:862.4px;top:204.64px;font-size:12px;line-height:12px;color:#000;letter-spacing:-0.15px">IDA BRANCH</div>
<div class="t" style="left:962.4px;top:204.64px;font-size:12px;line-height:12px;color:#000;letter-spacing:-0.15px">MYR</div>
<div class="t" style="left:1062.4px;top:204.64px;font-size:12px;line-height:12px;color:#000;letter-spacing:-0.15px">3841 john d...</div>
<div class="t" style="left:1162.4px;top:204.64px;font-size:12px;line-height:12px;color:#000;letter-spacing:-0.15px">3841 john d...</div>
<div class="t" style="right:278px;top:204.64px;font-size:12px;line-height:12px;color:#000;letter-spacing:-0.15px">0.00</div>
<div class="t" style="right:178px;top:204.64px;font-size:12px;line-height:12px;color:#000;letter-spacing:-0.15px">0.00</div>
<div class="t" style="right:78px;top:204.64px;font-size:12px;line-height:12px;color:#000;letter-spacing:-0.15px">10.00</div>
<div class="t" style="right:-23px;top:204.64px;font-size:12px;line-height:12px;color:#000;letter-spacing:-0.15px">10.00</div>
<div class="a" style="left:0;top:224px;width:1616px;height:28px;background:#fff;border-bottom:1px solid #d9dcde"></div>
<div class="a" style="left:12px;top:230px;width:16px;height:16px;border:1px solid #7f8c8d;border-radius:3px;background:#fff"></div>
<svg class="a" style="left:94px;top:229.3px" width="12" height="16" viewBox="0 0 12 16"><path d="M0 0 H8 L12 4.3 V16 H0 Z" fill="#e4daf0"/><path d="M8 0 L12 4.3 H8 Z" fill="#cbbfd9"/><rect x="2.2" y="6" width="7.6" height=".9" fill="#b6a9c4"/><rect x="2.2" y="8.8" width="7.6" height=".9" fill="#c0b3cd"/><rect x="2.2" y="10.9" width="5" height=".9" fill="#b6a9c4"/></svg>
<div class="t" style="left:162.4px;top:232.64px;font-size:12px;line-height:12px;color:#000;letter-spacing:-0.15px">1000700</div>
<div class="t" style="left:662.4px;top:232.64px;font-size:12px;line-height:12px;color:#000;letter-spacing:-0.15px">DRAFT</div>
<div class="t" style="left:762.4px;top:232.64px;font-size:12px;line-height:12px;color:#000;letter-spacing:-0.15px">ACTIVE</div>
<div class="t" style="left:862.4px;top:232.64px;font-size:12px;line-height:12px;color:#000;letter-spacing:-0.15px">IDA BRANCH</div>
<div class="t" style="left:962.4px;top:232.64px;font-size:12px;line-height:12px;color:#000;letter-spacing:-0.15px">MYR</div>
<div class="t" style="left:1062.4px;top:232.64px;font-size:12px;line-height:12px;color:#000;letter-spacing:-0.15px">3841 john d...</div>
<div class="t" style="left:1162.4px;top:232.64px;font-size:12px;line-height:12px;color:#000;letter-spacing:-0.15px">3841 john d...</div>
<div class="t" style="right:278px;top:232.64px;font-size:12px;line-height:12px;color:#000;letter-spacing:-0.15px">0.00</div>
<div class="t" style="right:178px;top:232.64px;font-size:12px;line-height:12px;color:#000;letter-spacing:-0.15px">0.00</div>
<div class="t" style="right:78px;top:232.64px;font-size:12px;line-height:12px;color:#000;letter-spacing:-0.15px">0.00</div>
<div class="t" style="right:-23px;top:232.64px;font-size:12px;line-height:12px;color:#000;letter-spacing:-0.15px">0.00</div>
<div class="a" style="left:0;top:252px;width:1616px;height:28px;background:#fafbfd;border-bottom:1px solid #d9dcde"></div>
<div class="a" style="left:12px;top:258px;width:16px;height:16px;border:1px solid #7f8c8d;border-radius:3px;background:#fff"></div>
<svg class="a" style="left:94px;top:257.3px" width="12" height="16" viewBox="0 0 12 16"><path d="M0 0 H8 L12 4.3 V16 H0 Z" fill="#e4daf0"/><path d="M8 0 L12 4.3 H8 Z" fill="#cbbfd9"/><rect x="2.2" y="6" width="7.6" height=".9" fill="#b6a9c4"/><rect x="2.2" y="8.8" width="7.6" height=".9" fill="#c0b3cd"/><rect x="2.2" y="10.9" width="5" height=".9" fill="#b6a9c4"/></svg>
<div class="t" style="left:162.4px;top:260.64px;font-size:12px;line-height:12px;color:#000;letter-spacing:-0.15px">1000699</div>
<div class="t" style="left:662.4px;top:260.64px;font-size:12px;line-height:12px;color:#000;letter-spacing:-0.15px">DRAFT</div>
<div class="t" style="left:762.4px;top:260.64px;font-size:12px;line-height:12px;color:#000;letter-spacing:-0.15px">ACTIVE</div>
<div class="t" style="left:862.4px;top:260.64px;font-size:12px;line-height:12px;color:#000;letter-spacing:-0.15px">IDA BRANCH</div>
<div class="t" style="left:962.4px;top:260.64px;font-size:12px;line-height:12px;color:#000;letter-spacing:-0.15px">MYR</div>
<div class="t" style="left:1062.4px;top:260.64px;font-size:12px;line-height:12px;color:#000;letter-spacing:-0.15px">3841 john d...</div>
<div class="t" style="left:1162.4px;top:260.64px;font-size:12px;line-height:12px;color:#000;letter-spacing:-0.15px">3841 john d...</div>
<div class="t" style="right:278px;top:260.64px;font-size:12px;line-height:12px;color:#000;letter-spacing:-0.15px">0.00</div>
<div class="t" style="right:178px;top:260.64px;font-size:12px;line-height:12px;color:#000;letter-spacing:-0.15px">0.00</div>
<div class="t" style="right:78px;top:260.64px;font-size:12px;line-height:12px;color:#000;letter-spacing:-0.15px">10.00</div>
<div class="t" style="right:-23px;top:260.64px;font-size:12px;line-height:12px;color:#000;letter-spacing:-0.15px">10.00</div>
<div class="a" style="left:0;top:280px;width:1616px;height:28px;background:#fff;border-bottom:1px solid #d9dcde"></div>
<div class="a" style="left:12px;top:286px;width:16px;height:16px;border:1px solid #7f8c8d;border-radius:3px;background:#fff"></div>
<svg class="a" style="left:94px;top:285.3px" width="12" height="16" viewBox="0 0 12 16"><path d="M0 0 H8 L12 4.3 V16 H0 Z" fill="#e4daf0"/><path d="M8 0 L12 4.3 H8 Z" fill="#cbbfd9"/><rect x="2.2" y="6" width="7.6" height=".9" fill="#b6a9c4"/><rect x="2.2" y="8.8" width="7.6" height=".9" fill="#c0b3cd"/><rect x="2.2" y="10.9" width="5" height=".9" fill="#b6a9c4"/></svg>
<div class="t" style="left:162.4px;top:288.64px;font-size:12px;line-height:12px;color:#000;letter-spacing:-0.15px">1000698</div>
<div class="t" style="left:662.4px;top:288.64px;font-size:12px;line-height:12px;color:#000;letter-spacing:-0.15px">DRAFT</div>
<div class="t" style="left:762.4px;top:288.64px;font-size:12px;line-height:12px;color:#000;letter-spacing:-0.15px">ACTIVE</div>
<div class="t" style="left:862.4px;top:288.64px;font-size:12px;line-height:12px;color:#000;letter-spacing:-0.15px">IDA BRANCH</div>
<div class="t" style="left:962.4px;top:288.64px;font-size:12px;line-height:12px;color:#000;letter-spacing:-0.15px">MYR</div>
<div class="t" style="left:1062.4px;top:288.64px;font-size:12px;line-height:12px;color:#000;letter-spacing:-0.15px">3841 john d...</div>
<div class="t" style="left:1162.4px;top:288.64px;font-size:12px;line-height:12px;color:#000;letter-spacing:-0.15px">3841 john d...</div>
<div class="t" style="right:278px;top:288.64px;font-size:12px;line-height:12px;color:#000;letter-spacing:-0.15px">0.00</div>
<div class="t" style="right:178px;top:288.64px;font-size:12px;line-height:12px;color:#000;letter-spacing:-0.15px">0.00</div>
<div class="t" style="right:78px;top:288.64px;font-size:12px;line-height:12px;color:#000;letter-spacing:-0.15px">120.00</div>
<div class="t" style="right:-23px;top:288.64px;font-size:12px;line-height:12px;color:#000;letter-spacing:-0.15px">120.00</div>
<div class="a" style="left:0;top:308px;width:1616px;height:28px;background:#fafbfd;border-bottom:1px solid #d9dcde"></div>
<div class="a" style="left:12px;top:314px;width:16px;height:16px;border:1px solid #7f8c8d;border-radius:3px;background:#fff"></div>
<svg class="a" style="left:94px;top:313.3px" width="12" height="16" viewBox="0 0 12 16"><path d="M0 0 H8 L12 4.3 V16 H0 Z" fill="#e4daf0"/><path d="M8 0 L12 4.3 H8 Z" fill="#cbbfd9"/><rect x="2.2" y="6" width="7.6" height=".9" fill="#b6a9c4"/><rect x="2.2" y="8.8" width="7.6" height=".9" fill="#c0b3cd"/><rect x="2.2" y="10.9" width="5" height=".9" fill="#b6a9c4"/></svg>
<div class="t" style="left:162.4px;top:316.64px;font-size:12px;line-height:12px;color:#000;letter-spacing:-0.15px">1000697</div>
<div class="t" style="left:662.4px;top:316.64px;font-size:12px;line-height:12px;color:#000;letter-spacing:-0.15px">DRAFT</div>
<div class="t" style="left:762.4px;top:316.64px;font-size:12px;line-height:12px;color:#000;letter-spacing:-0.15px">ACTIVE</div>
<div class="t" style="left:862.4px;top:316.64px;font-size:12px;line-height:12px;color:#000;letter-spacing:-0.15px">IDA BRANCH</div>
<div class="t" style="left:962.4px;top:316.64px;font-size:12px;line-height:12px;color:#000;letter-spacing:-0.15px">MYR</div>
<div class="t" style="left:1062.4px;top:316.64px;font-size:12px;line-height:12px;color:#000;letter-spacing:-0.15px">3841 john d...</div>
<div class="t" style="left:1162.4px;top:316.64px;font-size:12px;line-height:12px;color:#000;letter-spacing:-0.15px">3841 john d...</div>
<div class="t" style="right:278px;top:316.64px;font-size:12px;line-height:12px;color:#000;letter-spacing:-0.15px">0.00</div>
<div class="t" style="right:178px;top:316.64px;font-size:12px;line-height:12px;color:#000;letter-spacing:-0.15px">0.00</div>
<div class="t" style="right:78px;top:316.64px;font-size:12px;line-height:12px;color:#000;letter-spacing:-0.15px">10.00</div>
<div class="t" style="right:-23px;top:316.64px;font-size:12px;line-height:12px;color:#000;letter-spacing:-0.15px">10.00</div>
<div class="a" style="left:0;top:336px;width:1616px;height:28px;background:#fff;border-bottom:1px solid #d9dcde"></div>
<div class="a" style="left:12px;top:342px;width:16px;height:16px;border:1px solid #7f8c8d;border-radius:3px;background:#fff"></div>
<svg class="a" style="left:94px;top:341.3px" width="12" height="16" viewBox="0 0 12 16"><path d="M0 0 H8 L12 4.3 V16 H0 Z" fill="#e4daf0"/><path d="M8 0 L12 4.3 H8 Z" fill="#cbbfd9"/><rect x="2.2" y="6" width="7.6" height=".9" fill="#b6a9c4"/><rect x="2.2" y="8.8" width="7.6" height=".9" fill="#c0b3cd"/><rect x="2.2" y="10.9" width="5" height=".9" fill="#b6a9c4"/></svg>
<div class="t" style="left:162.4px;top:344.64px;font-size:12px;line-height:12px;color:#000;letter-spacing:-0.15px">1000696</div>
<div class="t" style="left:662.4px;top:344.64px;font-size:12px;line-height:12px;color:#000;letter-spacing:-0.15px">DRAFT</div>
<div class="t" style="left:762.4px;top:344.64px;font-size:12px;line-height:12px;color:#000;letter-spacing:-0.15px">ACTIVE</div>
<div class="t" style="left:862.4px;top:344.64px;font-size:12px;line-height:12px;color:#000;letter-spacing:-0.15px">IDA BRANCH</div>
<div class="t" style="left:962.4px;top:344.64px;font-size:12px;line-height:12px;color:#000;letter-spacing:-0.15px">MYR</div>
<div class="t" style="left:1062.4px;top:344.64px;font-size:12px;line-height:12px;color:#000;letter-spacing:-0.15px">3841 john d...</div>
<div class="t" style="left:1162.4px;top:344.64px;font-size:12px;line-height:12px;color:#000;letter-spacing:-0.15px">3841 john d...</div>
<div class="t" style="right:278px;top:344.64px;font-size:12px;line-height:12px;color:#000;letter-spacing:-0.15px">0.00</div>
<div class="t" style="right:178px;top:344.64px;font-size:12px;line-height:12px;color:#000;letter-spacing:-0.15px">0.00</div>
<div class="t" style="right:78px;top:344.64px;font-size:12px;line-height:12px;color:#000;letter-spacing:-0.15px">10.00</div>
<div class="t" style="right:-23px;top:344.64px;font-size:12px;line-height:12px;color:#000;letter-spacing:-0.15px">10.00</div>
<div class="a" style="left:0;top:364px;width:1616px;height:28px;background:#fafbfd;border-bottom:1px solid #d9dcde"></div>
<div class="a" style="left:12px;top:370px;width:16px;height:16px;border:1px solid #7f8c8d;border-radius:3px;background:#fff"></div>
<svg class="a" style="left:94px;top:369.3px" width="12" height="16" viewBox="0 0 12 16"><path d="M0 0 H8 L12 4.3 V16 H0 Z" fill="#e4daf0"/><path d="M8 0 L12 4.3 H8 Z" fill="#cbbfd9"/><rect x="2.2" y="6" width="7.6" height=".9" fill="#b6a9c4"/><rect x="2.2" y="8.8" width="7.6" height=".9" fill="#c0b3cd"/><rect x="2.2" y="10.9" width="5" height=".9" fill="#b6a9c4"/></svg>
<div class="t" style="left:162.4px;top:372.64px;font-size:12px;line-height:12px;color:#000;letter-spacing:-0.15px">1000695</div>
<div class="t" style="left:662.4px;top:372.64px;font-size:12px;line-height:12px;color:#000;letter-spacing:-0.15px">DRAFT</div>
<div class="t" style="left:762.4px;top:372.64px;font-size:12px;line-height:12px;color:#000;letter-spacing:-0.15px">ACTIVE</div>
<div class="t" style="left:862.4px;top:372.64px;font-size:12px;line-height:12px;color:#000;letter-spacing:-0.15px">IDA BRANCH</div>
<div class="t" style="left:962.4px;top:372.64px;font-size:12px;line-height:12px;color:#000;letter-spacing:-0.15px">MYR</div>
<div class="t" style="left:1062.4px;top:372.64px;font-size:12px;line-height:12px;color:#000;letter-spacing:-0.15px">3841 john d...</div>
<div class="t" style="left:1162.4px;top:372.64px;font-size:12px;line-height:12px;color:#000;letter-spacing:-0.15px">3841 john d...</div>
<div class="t" style="right:278px;top:372.64px;font-size:12px;line-height:12px;color:#000;letter-spacing:-0.15px">0.00</div>
<div class="t" style="right:178px;top:372.64px;font-size:12px;line-height:12px;color:#000;letter-spacing:-0.15px">0.00</div>
<div class="t" style="right:78px;top:372.64px;font-size:12px;line-height:12px;color:#000;letter-spacing:-0.15px">10.00</div>
<div class="t" style="right:-23px;top:372.64px;font-size:12px;line-height:12px;color:#000;letter-spacing:-0.15px">10.00</div>
<div class="a" style="left:0;top:392px;width:1616px;height:28px;background:#fff;border-bottom:1px solid #d9dcde"></div>
<div class="a" style="left:12px;top:398px;width:16px;height:16px;border:1px solid #7f8c8d;border-radius:3px;background:#fff"></div>
<svg class="a" style="left:94px;top:397.3px" width="12" height="16" viewBox="0 0 12 16"><path d="M0 0 H8 L12 4.3 V16 H0 Z" fill="#e4daf0"/><path d="M8 0 L12 4.3 H8 Z" fill="#cbbfd9"/><rect x="2.2" y="6" width="7.6" height=".9" fill="#b6a9c4"/><rect x="2.2" y="8.8" width="7.6" height=".9" fill="#c0b3cd"/><rect x="2.2" y="10.9" width="5" height=".9" fill="#b6a9c4"/></svg>
<div class="t" style="left:162.4px;top:400.64px;font-size:12px;line-height:12px;color:#000;letter-spacing:-0.15px">1000694</div>
<div class="t" style="left:662.4px;top:400.64px;font-size:12px;line-height:12px;color:#000;letter-spacing:-0.15px">DRAFT</div>
<div class="t" style="left:762.4px;top:400.64px;font-size:12px;line-height:12px;color:#000;letter-spacing:-0.15px">ACTIVE</div>
<div class="t" style="left:862.4px;top:400.64px;font-size:12px;line-height:12px;color:#000;letter-spacing:-0.15px">IDA BRANCH</div>
<div class="t" style="left:962.4px;top:400.64px;font-size:12px;line-height:12px;color:#000;letter-spacing:-0.15px">MYR</div>
<div class="t" style="left:1062.4px;top:400.64px;font-size:12px;line-height:12px;color:#000;letter-spacing:-0.15px">3841 john d...</div>
<div class="t" style="left:1162.4px;top:400.64px;font-size:12px;line-height:12px;color:#000;letter-spacing:-0.15px">3841 john d...</div>
<div class="t" style="right:278px;top:400.64px;font-size:12px;line-height:12px;color:#000;letter-spacing:-0.15px">0.00</div>
<div class="t" style="right:178px;top:400.64px;font-size:12px;line-height:12px;color:#000;letter-spacing:-0.15px">0.00</div>
<div class="t" style="right:78px;top:400.64px;font-size:12px;line-height:12px;color:#000;letter-spacing:-0.15px">120.00</div>
<div class="t" style="right:-23px;top:400.64px;font-size:12px;line-height:12px;color:#000;letter-spacing:-0.15px">120.00</div>
<div class="a" style="left:0;top:420px;width:1616px;height:28px;background:#fafbfd;border-bottom:1px solid #d9dcde"></div>
<div class="a" style="left:12px;top:426px;width:16px;height:16px;border:1px solid #7f8c8d;border-radius:3px;background:#fff"></div>
<svg class="a" style="left:94px;top:425.3px" width="12" height="16" viewBox="0 0 12 16"><path d="M0 0 H8 L12 4.3 V16 H0 Z" fill="#e4daf0"/><path d="M8 0 L12 4.3 H8 Z" fill="#cbbfd9"/><rect x="2.2" y="6" width="7.6" height=".9" fill="#b6a9c4"/><rect x="2.2" y="8.8" width="7.6" height=".9" fill="#c0b3cd"/><rect x="2.2" y="10.9" width="5" height=".9" fill="#b6a9c4"/></svg>
<div class="t" style="left:162.4px;top:428.64px;font-size:12px;line-height:12px;color:#000;letter-spacing:-0.15px">1000693</div>
<div class="t" style="left:662.4px;top:428.64px;font-size:12px;line-height:12px;color:#000;letter-spacing:-0.15px">DRAFT</div>
<div class="t" style="left:762.4px;top:428.64px;font-size:12px;line-height:12px;color:#000;letter-spacing:-0.15px">ACTIVE</div>
<div class="t" style="left:862.4px;top:428.64px;font-size:12px;line-height:12px;color:#000;letter-spacing:-0.15px">IDA BRANCH</div>
<div class="t" style="left:962.4px;top:428.64px;font-size:12px;line-height:12px;color:#000;letter-spacing:-0.15px">MYR</div>
<div class="t" style="left:1062.4px;top:428.64px;font-size:12px;line-height:12px;color:#000;letter-spacing:-0.15px">3841 john d...</div>
<div class="t" style="left:1162.4px;top:428.64px;font-size:12px;line-height:12px;color:#000;letter-spacing:-0.15px">3841 john d...</div>
<div class="t" style="right:278px;top:428.64px;font-size:12px;line-height:12px;color:#000;letter-spacing:-0.15px">0.00</div>
<div class="t" style="right:178px;top:428.64px;font-size:12px;line-height:12px;color:#000;letter-spacing:-0.15px">0.00</div>
<div class="t" style="right:78px;top:428.64px;font-size:12px;line-height:12px;color:#000;letter-spacing:-0.15px">12.00</div>
<div class="t" style="right:-23px;top:428.64px;font-size:12px;line-height:12px;color:#000;letter-spacing:-0.15px">12.00</div>
<div class="a" style="left:0;top:448px;width:1616px;height:28px;background:#fff;border-bottom:1px solid #d9dcde"></div>
<div class="a" style="left:12px;top:454px;width:16px;height:16px;border:1px solid #7f8c8d;border-radius:3px;background:#fff"></div>
<svg class="a" style="left:94px;top:453.3px" width="12" height="16" viewBox="0 0 12 16"><path d="M0 0 H8 L12 4.3 V16 H0 Z" fill="#e4daf0"/><path d="M8 0 L12 4.3 H8 Z" fill="#cbbfd9"/><rect x="2.2" y="6" width="7.6" height=".9" fill="#b6a9c4"/><rect x="2.2" y="8.8" width="7.6" height=".9" fill="#c0b3cd"/><rect x="2.2" y="10.9" width="5" height=".9" fill="#b6a9c4"/></svg>
<div class="t" style="left:162.4px;top:456.64px;font-size:12px;line-height:12px;color:#000;letter-spacing:-0.15px">1000692</div>
<div class="t" style="left:662.4px;top:456.64px;font-size:12px;line-height:12px;color:#000;letter-spacing:-0.15px">DRAFT</div>
<div class="t" style="left:762.4px;top:456.64px;font-size:12px;line-height:12px;color:#000;letter-spacing:-0.15px">ACTIVE</div>
<div class="t" style="left:862.4px;top:456.64px;font-size:12px;line-height:12px;color:#000;letter-spacing:-0.15px">IDA BRANCH</div>
<div class="t" style="left:962.4px;top:456.64px;font-size:12px;line-height:12px;color:#000;letter-spacing:-0.15px">MYR</div>
<div class="t" style="left:1062.4px;top:456.64px;font-size:12px;line-height:12px;color:#000;letter-spacing:-0.15px">3841 john d...</div>
<div class="t" style="left:1162.4px;top:456.64px;font-size:12px;line-height:12px;color:#000;letter-spacing:-0.15px">3841 john d...</div>
<div class="t" style="right:278px;top:456.64px;font-size:12px;line-height:12px;color:#000;letter-spacing:-0.15px">0.00</div>
<div class="t" style="right:178px;top:456.64px;font-size:12px;line-height:12px;color:#000;letter-spacing:-0.15px">0.00</div>
<div class="t" style="right:78px;top:456.64px;font-size:12px;line-height:12px;color:#000;letter-spacing:-0.15px">30.00</div>
<div class="t" style="right:-23px;top:456.64px;font-size:12px;line-height:12px;color:#000;letter-spacing:-0.15px">30.00</div>
<div class="a" style="left:0;top:476px;width:1616px;height:28px;background:#fafbfd;border-bottom:1px solid #d9dcde"></div>
<div class="a" style="left:12px;top:482px;width:16px;height:16px;border:1px solid #7f8c8d;border-radius:3px;background:#fff"></div>
<svg class="a" style="left:94px;top:481.3px" width="12" height="16" viewBox="0 0 12 16"><path d="M0 0 H8 L12 4.3 V16 H0 Z" fill="#e4daf0"/><path d="M8 0 L12 4.3 H8 Z" fill="#cbbfd9"/><rect x="2.2" y="6" width="7.6" height=".9" fill="#b6a9c4"/><rect x="2.2" y="8.8" width="7.6" height=".9" fill="#c0b3cd"/><rect x="2.2" y="10.9" width="5" height=".9" fill="#b6a9c4"/></svg>
<div class="t" style="left:162.4px;top:484.64px;font-size:12px;line-height:12px;color:#000;letter-spacing:-0.15px">1000691</div>
<div class="t" style="left:662.4px;top:484.64px;font-size:12px;line-height:12px;color:#000;letter-spacing:-0.15px">DRAFT</div>
<div class="t" style="left:762.4px;top:484.64px;font-size:12px;line-height:12px;color:#000;letter-spacing:-0.15px">ACTIVE</div>
<div class="t" style="left:862.4px;top:484.64px;font-size:12px;line-height:12px;color:#000;letter-spacing:-0.15px">IDA BRANCH</div>
<div class="t" style="left:962.4px;top:484.64px;font-size:12px;line-height:12px;color:#000;letter-spacing:-0.15px">MYR</div>
<div class="t" style="left:1062.4px;top:484.64px;font-size:12px;line-height:12px;color:#000;letter-spacing:-0.15px">3841 john d...</div>
<div class="t" style="left:1162.4px;top:484.64px;font-size:12px;line-height:12px;color:#000;letter-spacing:-0.15px">3841 john d...</div>
<div class="t" style="right:278px;top:484.64px;font-size:12px;line-height:12px;color:#000;letter-spacing:-0.15px">0.00</div>
<div class="t" style="right:178px;top:484.64px;font-size:12px;line-height:12px;color:#000;letter-spacing:-0.15px">0.00</div>
<div class="t" style="right:78px;top:484.64px;font-size:12px;line-height:12px;color:#000;letter-spacing:-0.15px">10.00</div>
<div class="t" style="right:-23px;top:484.64px;font-size:12px;line-height:12px;color:#000;letter-spacing:-0.15px">10.00</div>
<div class="a" style="left:0;top:504px;width:1616px;height:28px;background:#fff;border-bottom:1px solid #d9dcde"></div>
<div class="a" style="left:12px;top:510px;width:16px;height:16px;border:1px solid #7f8c8d;border-radius:3px;background:#fff"></div>
<svg class="a" style="left:94px;top:509.3px" width="12" height="16" viewBox="0 0 12 16"><path d="M0 0 H8 L12 4.3 V16 H0 Z" fill="#e4daf0"/><path d="M8 0 L12 4.3 H8 Z" fill="#cbbfd9"/><rect x="2.2" y="6" width="7.6" height=".9" fill="#b6a9c4"/><rect x="2.2" y="8.8" width="7.6" height=".9" fill="#c0b3cd"/><rect x="2.2" y="10.9" width="5" height=".9" fill="#b6a9c4"/></svg>
<div class="t" style="left:162.4px;top:512.64px;font-size:12px;line-height:12px;color:#000;letter-spacing:-0.15px">1000690</div>
<div class="t" style="left:662.4px;top:512.64px;font-size:12px;line-height:12px;color:#000;letter-spacing:-0.15px">DRAFT</div>
<div class="t" style="left:762.4px;top:512.64px;font-size:12px;line-height:12px;color:#000;letter-spacing:-0.15px">ACTIVE</div>
<div class="t" style="left:862.4px;top:512.64px;font-size:12px;line-height:12px;color:#000;letter-spacing:-0.15px">IDA BRANCH</div>
<div class="t" style="left:962.4px;top:512.64px;font-size:12px;line-height:12px;color:#000;letter-spacing:-0.15px">MYR</div>
<div class="t" style="left:1062.4px;top:512.64px;font-size:12px;line-height:12px;color:#000;letter-spacing:-0.15px">2318 john d...</div>
<div class="t" style="left:1162.4px;top:512.64px;font-size:12px;line-height:12px;color:#000;letter-spacing:-0.15px">2318 john d...</div>
<div class="t" style="right:278px;top:512.64px;font-size:12px;line-height:12px;color:#000;letter-spacing:-0.15px">0.00</div>
<div class="t" style="right:178px;top:512.64px;font-size:12px;line-height:12px;color:#000;letter-spacing:-0.15px">0.00</div>
<div class="t" style="right:78px;top:512.64px;font-size:12px;line-height:12px;color:#000;letter-spacing:-0.15px">0.00</div>
<div class="t" style="right:-23px;top:512.64px;font-size:12px;line-height:12px;color:#000;letter-spacing:-0.15px">0.00</div>
</div>
<div class="a" style="left:1860px;top:340px;width:15px;height:522px;background:#f9f9f9"></div>
<svg class="a" style="left:1863px;top:345px" width="9" height="7" viewBox="0 0 9 7"><path d="M0 7 L4.5 0 L9 7 Z" fill="#8c8c8c"/></svg>
<div class="a" style="left:1863px;top:357.5px;width:9px;height:182.5px;border-radius:4.5px;background:#8a8a8a"></div>
<svg class="a" style="left:1863px;top:852px" width="9" height="7" viewBox="0 0 9 7"><path d="M0 0 L9 0 L4.5 7 Z" fill="#8c8c8c"/></svg>
<div class="a" style="left:244px;top:863px;width:1616px;height:15px;background:#fafafa"></div>
<svg class="a" style="left:248px;top:866px" width="8" height="9" viewBox="0 0 8 9"><path d="M8 0 L0 4.5 L8 9 Z" fill="#8c8c8c"/></svg>
<div class="a" style="left:262px;top:866px;width:700px;height:9px;border-radius:4.5px;background:#8a8a8a"></div>
<svg class="a" style="left:1848px;top:866px" width="8" height="9" viewBox="0 0 8 9"><path d="M0 0 L8 4.5 L0 9 Z" fill="#8c8c8c"/></svg>
<div class="a" style="left:1860px;top:863px;width:15px;height:15px;background:#fff"></div>
<div class="a" style="left:1875px;top:275px;width:21px;height:603px;background:#fff;border-left:1px solid #bdc3c7"></div>
<div class="a" style="left:1876px;top:291px;width:20px;height:1px;background:#bdc3c7"></div>
<div class="a" style="left:1876px;top:374px;width:20px;height:1px;background:#bdc3c7"></div>
<div class="a" style="left:1876px;top:445px;width:20px;height:1px;background:#bdc3c7"></div>
<div class="a" style="left:1880.7px;top:303px;width:10.5px;height:10px;background:repeating-linear-gradient(to right,#222 0,#222 1.4px,transparent 1.4px,transparent 3px)"></div>
<div class="t" style="left:1879px;top:319px;font-size:12px;line-height:14px;writing-mode:vertical-rl;color:#262626;letter-spacing:-0.2px">Columns</div>
<svg class="a" style="left:1880.5px;top:387.5px" width="11" height="10" viewBox="0 0 11 10"><path d="M0.8 0.8 H10.2 L4.6 9.2 V5.4 Z" fill="none" stroke="#222" stroke-width="1.3" stroke-linejoin="round"/></svg>
<div class="t" style="left:1879px;top:404px;font-size:11.5px;line-height:14px;writing-mode:vertical-rl;color:#262626;letter-spacing:-0.3px">Filters</div>
</body></html>
